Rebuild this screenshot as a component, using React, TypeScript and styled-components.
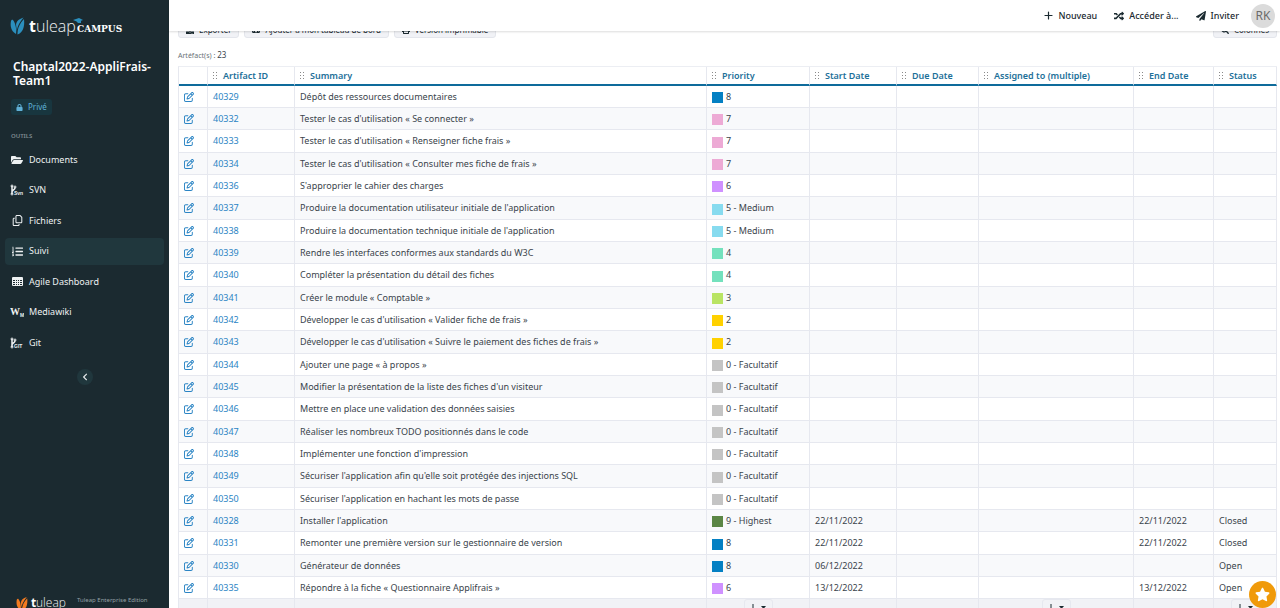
import React from "react";
import styled, { createGlobalStyle, css } from "styled-components";
import {
  FaFolderOpen,
  FaListOl,
  FaPaperPlane,
  FaRandom,
  FaStar,
  FaLock,
  FaChevronLeft,
  FaSearch,
  FaPrint,
  FaDownload,
  FaTachometerAlt,
} from "react-icons/fa";
import { FaRegCopy, FaRegPenToSquare } from "react-icons/fa6";

const GlobalStyle = createGlobalStyle`
  * { box-sizing: border-box; }
  body {
    margin: 0;
    background: #fff;
    color: #3a444c;
    font-family: "Noto Sans", "Open Sans", sans-serif;
    font-size: 9px;
    line-height: 14px;
  }
  button { font: inherit; color: inherit; border: 0; padding: 0; background: none; cursor: pointer; }
  a { text-decoration: none; }
`;

const Shell = styled.div`
  display: grid;
  grid-template-columns: 169px minmax(0, 1fr);
  height: 100vh;
  overflow: hidden;
`;

const Sidebar = styled.aside`
  display: flex;
  flex-direction: column;
  min-height: 0;
  overflow: hidden;
  background: #1b2a30;
  color: #e6eaec;
`;

const LogoLink = styled.a`
  display: block;
  padding: 15px 0 0 10px;
  height: 60px;
  svg { display: block; }
`;

const ProjectName = styled.h1`
  margin: 0;
  padding: 0 12px 0 13px;
  color: #fff;
  font-size: 12px;
  line-height: 14px;
  font-weight: 600;
`;

const Privacy = styled.span`
  display: flex;
  align-items: center;
  align-self: flex-start;
  gap: 5px;
  height: 16px;
  margin: 11px 0 0 11px;
  padding: 0 5px;
  border-radius: 3px;
  background: #18363f;
  color: #5fb0d6;
  font-size: 8px;
`;

const SectionTitle = styled.h2`
  margin: 15px 0 4px 11px;
  color: #7f8b90;
  font-size: 6px;
  line-height: 12px;
  font-weight: 600;
`;

const NavList = styled.ul`
  display: flex;
  flex-direction: column;
  justify-content: space-between;
  flex-shrink: 0;
  min-height: 210px;
  margin: 0;
  padding: 0 5px;
  list-style: none;
`;

const NavLink = styled.a<{ $active?: boolean }>`
  display: flex;
  align-items: center;
  gap: 5px;
  height: 27px;
  padding-left: 5px;
  border-radius: 4px;
  color: #eef1f2;
  background: ${(p) => (p.$active ? "#20373d" : "transparent")};
`;

const NavIcon = styled.span`
  display: flex;
  justify-content: center;
  width: 14px;
`;

const Collapse = styled.button`
  display: flex;
  align-items: center;
  justify-content: center;
  align-self: center;
  flex-shrink: 0;
  width: 16px;
  height: 16px;
  margin-top: 13px;
  border-radius: 50%;
  background: #20373d;
`;

const SidebarFooter = styled.footer`
  display: flex;
  align-items: flex-start;
  gap: 11px;
  height: 16px;
  margin-top: auto;
  padding-left: 16px;
  color: #94a0a5;
  font-size: 6px;
  line-height: 10px;
  svg { flex-shrink: 0; margin-top: 3px; }
  p { margin: 3px 0 0; }
`;

const Main = styled.main`
  display: flex;
  flex-direction: column;
  min-width: 0;
  min-height: 0;
`;

const TopBar = styled.header`
  position: relative;
  z-index: 1;
  display: flex;
  align-items: center;
  justify-content: flex-end;
  gap: 17px;
  flex-shrink: 0;
  height: 31px;
  padding-right: 5px;
  background: #fff;
  box-shadow: 0 1px 2px rgba(0, 0, 0, 0.14);
`;

const TopAction = styled.button`
  display: flex;
  align-items: center;
  gap: 5px;
  color: #1b2a30;
  font-weight: 500;
`;

const Avatar = styled.button`
  width: 24px;
  height: 24px;
  margin-left: -5px;
  border-radius: 50%;
  background: #dbdbdb;
  color: #6b6b6b;
  font-size: 12px;
`;

const Content = styled.div`
  flex: 1;
  min-height: 0;
  overflow: hidden;
  padding: 0 3px 0 9px;
`;

const ToolRow = styled.div`
  display: flex;
  gap: 5px;
  margin-top: -10px;
`;

const ToolButton = styled.button<{ $end?: boolean }>`
  display: flex;
  align-items: center;
  gap: 5px;
  height: 17px;
  padding: 0 7px;
  border: 1px solid #e4e6ec;
  border-radius: 3px;
  background: #f1f2f6;
  color: #1b2a30;
  font-size: 8px;
  ${(p) =>
    p.$end &&
    css`
      margin-left: auto;
    `}
`;

const Count = styled.p`
  margin: 10px 0 3px;
  color: #6a7278;
  font-size: 7px;
  strong { color: #3a444c; font-size: 8px; font-weight: 400; }
`;

const Table = styled.table`
  width: 100%;
  table-layout: fixed;
  border-collapse: separate;
  border-spacing: 0;
  border-left: 1px solid #e6e8ef;
  border-top: 1px solid #eceef3;
`;

const Head = styled.th<{ $width?: number }>`
  ${(p) =>
    p.$width &&
    css`
      width: ${p.$width}px;
    `}
  height: 19px;
  padding: 0 0 0 5px;
  border-right: 1px solid #e6e8ef;
  border-bottom: 2px solid #0e6b9b;
  color: #1d7099;
  font-weight: 600;
  text-align: left;
  white-space: nowrap;
`;

const HeadInner = styled.span`
  display: flex;
  align-items: center;
  gap: 5px;
`;

const Row = styled.tr`
  &:nth-child(even) { background: #f8f9fb; }
  &:nth-child(3n) > td { height: 23px; }
`;

const Cell = styled.td`
  height: 22px;
  padding: 0 5px;
  border-right: 1px solid #e6e8ef;
  border-bottom: 1px solid #e6e8ef;
  white-space: nowrap;
`;

const FootCell = styled(Cell)`
  background: #f1f2f6;
  text-align: center;
  vertical-align: top;
`;

const CellLink = styled.a`
  color: #2a84c4;
  svg { display: block; }
`;

const Priority = styled.span`
  display: flex;
  align-items: center;
  gap: 3px;
`;

const Swatch = styled.i<{ $color: string }>`
  width: 11px;
  height: 11px;
  margin-top: 2px;
  background: ${(p) => p.$color};
`;

const AggregateButton = styled.button`
  display: flex;
  align-items: center;
  justify-content: center;
  width: 29px;
  height: 17px;
  margin: 0 auto;
  border: 1px solid #e6e8ef;
  border-radius: 3px;
  color: #1b2a30;
`;

const StarButton = styled.button`
  position: fixed;
  right: 4px;
  bottom: 0;
  z-index: 2;
  display: flex;
  align-items: center;
  justify-content: center;
  width: 27px;
  height: 27px;
  border-radius: 50%;
  background: #f09a0a;
  color: #fff;
`;

const Leaf = ({ color }: { color: string }) => (
  <g fill={color}>
    <path d="M1 6 C0 11 1 16 6 19 C6.500 15 6 9 3 5 C2.500 4.500 1.300 4.800 1 6Z" />
    <path d="M13.500 2.500 C8.500 4 5.500 7 6.200 11 C6.600 13.500 6.800 15 6.800 17 C7 12 9 8 13.500 2.500Z" />
    <path d="M14 4 C9.500 9 7.500 13 7.500 19.500 C12.500 18 15 12 14 4Z" />
  </g>
);

const CampusLogo = () => (
  <svg width="120" height="26" viewBox="0 0 120 26" role="img" aria-label="Tuleap Campus">
    <Leaf color="#2b8fbe" />
    <text x="19" y="17" fill="#fff" fontFamily="Open Sans" fontSize="16" fontWeight="700">t</text>
    <text x="26" y="17" fill="#f0f3f4" fontFamily="Open Sans" fontSize="16" fontWeight="300">uleap</text>
    <path d="M63 5 L69 3 L73 5 L68 7Z M66 6 H71 V8 H68Z" fill="#2b8fbe" />
    <text x="67" y="17" fill="#fff" fontFamily="DejaVu Serif Condensed, DejaVu Serif" fontSize="10" fontWeight="700">CAMPUS</text>
  </svg>
);

const TuleapLogo = () => (
  <svg width="50" height="18" viewBox="0 0 50 18" role="img" aria-label="Tuleap">
    <g transform="scale(0.8)">
      <Leaf color="#f47b20" />
    </g>
    <text x="15" y="12" fill="#fff" fontFamily="Open Sans" fontSize="12" fontWeight="700">t</text>
    <text x="20" y="12" fill="#f0f3f4" fontFamily="Open Sans" fontSize="12" fontWeight="300">uleap</text>
  </svg>
);

const RepoIcon = ({ label }: { label: string }) => (
  <svg width="14" height="12" viewBox="0 0 14 12" fill="none" stroke="currentColor" aria-hidden="true">
    <path d="M2 2V10M2 8C2 5.500 5 6.500 5 3.500" strokeWidth="1.500" />
    <circle cx="2" cy="2" r="1" strokeWidth="1" />
    <circle cx="2" cy="10" r="1" strokeWidth="1" />
    <circle cx="5" cy="3" r="1" strokeWidth="1" />
    <text x="4" y="11" fill="currentColor" stroke="none" fontFamily="Liberation Sans" fontSize="5" fontWeight="700">
      {label}
    </text>
  </svg>
);

const WikiIcon = () => (
  <svg width="14" height="12" viewBox="0 0 14 12" aria-hidden="true">
    <text x="0" y="9" fill="currentColor" fontFamily="Liberation Serif" fontSize="10" fontWeight="700">W</text>
    <text x="10" y="11" fill="currentColor" fontFamily="Liberation Sans" fontSize="5" fontWeight="700">M</text>
  </svg>
);

const GridIcon = () => (
  <svg width="11" height="9" viewBox="0 0 11 9" aria-hidden="true">
    <rect width="11" height="9" rx="1" fill="currentColor" />
    <path
      d="M1 3h2v1H1z M4 3h1v1H4z M6 3h1v1H6z M8 3h2v1H8z M1 5h2v1H1z M4 5h1v1H4z M6 5h1v1H6z M8 5h2v1H8z M1 7h2v1H1z M4 7h1v1H4z M6 7h1v1H6z M8 7h2v1H8z"
      fill="#1b2a30"
    />
  </svg>
);

const PlusIcon = () => (
  <svg width="9" height="9" viewBox="0 0 9 9" aria-hidden="true">
    <path d="M4.500 1V8M1 4.500H8" stroke="currentColor" strokeWidth="1.200" strokeLinecap="round" />
  </svg>
);

const Grip = () => (
  <svg width="5" height="7" viewBox="0 0 5 7" fill="#8a8a8a" aria-hidden="true">
    <path d="M0 0h1v1H0z M3 0h1v1H3z M0 3h1v1H0z M3 3h1v1H3z M0 6h1v1H0z M3 6h1v1H3z" />
  </svg>
);

const AggregateIcon = () => (
  <svg width="16" height="8" viewBox="0 0 16 8" aria-hidden="true">
    <path d="M3 0V7M0 4L3 7L6 4" stroke="currentColor" fill="none" />
    <path d="M11 2h5l-2.500 3z" fill="currentColor" />
  </svg>
);

const navItems: { label: string; icon: React.ReactNode; active?: boolean }[] = [
  { label: "Documents", icon: <FaFolderOpen size={12} /> },
  { label: "SVN", icon: <RepoIcon label="Svn" /> },
  { label: "Fichiers", icon: <FaRegCopy size={11} /> },
  { label: "Suivi", icon: <FaListOl size={11} />, active: true },
  { label: "Agile Dashboard", icon: <GridIcon /> },
  { label: "Mediawiki", icon: <WikiIcon /> },
  { label: "Git", icon: <RepoIcon label="GIT" /> },
];

const columns: { label: string; width?: number; aggregate?: boolean }[] = [
  { label: "Artifact ID", width: 87 },
  { label: "Summary" },
  { label: "Priority", width: 103, aggregate: true },
  { label: "Start Date", width: 87 },
  { label: "Due Date", width: 82 },
  { label: "Assigned to (multiple)", width: 155, aggregate: true },
  { label: "End Date", width: 80 },
  { label: "Status", width: 63, aggregate: true },
];

const colors: Record<string, string> = {
  "9 - Highest": "#5b8645",
  "8": "#0480c3",
  "7": "#edaad5",
  "6": "#cf91ff",
  "5 - Medium": "#87dbef",
  "4": "#74e1bd",
  "3": "#b9e463",
  "2": "#ffd100",
  "0 - Facultatif": "#c4c4c4",
};

type Artifact = [id: number, summary: string, priority: string, start?: string, end?: string, status?: string];

const artifacts: Artifact[] = [
  [40329, "Dépôt des ressources documentaires", "8"],
  [40332, "Tester le cas d'utilisation « Se connecter »", "7"],
  [40333, "Tester le cas d'utilisation « Renseigner fiche frais »", "7"],
  [40334, "Tester le cas d'utilisation « Consulter mes fiche de frais »", "7"],
  [40336, "S'approprier le cahier des charges", "6"],
  [40337, "Produire la documentation utilisateur initiale de l'application", "5 - Medium"],
  [40338, "Produire la documentation technique initiale de l'application", "5 - Medium"],
  [40339, "Rendre les interfaces conformes aux standards du W3C", "4"],
  [40340, "Compléter la présentation du détail des fiches", "4"],
  [40341, "Créer le module « Comptable »", "3"],
  [40342, "Développer le cas d'utilisation « Valider fiche de frais »", "2"],
  [40343, "Développer le cas d'utilisation « Suivre le paiement des fiches de frais »", "2"],
  [40344, "Ajouter une page « à propos »", "0 - Facultatif"],
  [40345, "Modifier la présentation de la liste des fiches d'un visiteur", "0 - Facultatif"],
  [40346, "Mettre en place une validation des données saisies", "0 - Facultatif"],
  [40347, "Réaliser les nombreux TODO positionnés dans le code", "0 - Facultatif"],
  [40348, "Implémenter une fonction d'impression", "0 - Facultatif"],
  [40349, "Sécuriser l'application afin qu'elle soit protégée des injections SQL", "0 - Facultatif"],
  [40350, "Sécuriser l'application en hachant les mots de passe", "0 - Facultatif"],
  [40328, "Installer l'application", "9 - Highest", "22/11/2022", "22/11/2022", "Closed"],
  [40331, "Remonter une première version sur le gestionnaire de version", "8", "22/11/2022", "22/11/2022", "Closed"],
  [40330, "Générateur de données", "8", "06/12/2022", "", "Open"],
  [40335, "Répondre à la fiche « Questionnaire Applifrais »", "6", "13/12/2022", "13/12/2022", "Open"],
];

export default function App() {
  return (
    <>
      <GlobalStyle />
      <Shell>
        <Sidebar>
          <LogoLink href="#"><CampusLogo /></LogoLink>
          <ProjectName>Chaptal2022-AppliFrais-Team1</ProjectName>
          <Privacy><FaLock size={7} />Privé</Privacy>
          <SectionTitle>OUTILS</SectionTitle>
          <NavList>
            {navItems.map((item) => (
              <li key={item.label}>
                <NavLink href="#" $active={item.active}>
                  <NavIcon>{item.icon}</NavIcon>
                  {item.label}
                </NavLink>
              </li>
            ))}
          </NavList>
          <Collapse aria-label="Replier"><FaChevronLeft size={8} /></Collapse>
          <SidebarFooter>
            <TuleapLogo />
            <p>Tuleap Enterprise Edition<br />14.2-3</p>
          </SidebarFooter>
        </Sidebar>
        <Main>
          <TopBar>
            <TopAction><PlusIcon />Nouveau</TopAction>
            <TopAction><FaRandom size={10} />Accéder à...</TopAction>
            <TopAction><FaPaperPlane size={10} />Inviter</TopAction>
            <Avatar>RK</Avatar>
          </TopBar>
          <Content>
            <ToolRow>
              <ToolButton><FaDownload size={8} />Exporter</ToolButton>
              <ToolButton><FaTachometerAlt size={8} />Ajouter à mon tableau de bord</ToolButton>
              <ToolButton><FaPrint size={8} />Version imprimable</ToolButton>
              <ToolButton $end><FaSearch size={8} />Colonnes</ToolButton>
            </ToolRow>
            <Count>Artéfact(s) : <strong>23</strong></Count>
            <Table>
              <thead>
                <tr>
                  <Head $width={29} aria-label="Modifier" />
                  {columns.map((c) => (
                    <Head key={c.label} $width={c.width}>
                      <HeadInner><Grip />{c.label}</HeadInner>
                    </Head>
                  ))}
                </tr>
              </thead>
              <tbody>
                {artifacts.map(([id, summary, priority, start, end, status]) => (
                  <Row key={id}>
                    <Cell><CellLink href="#" aria-label={`Modifier ${id}`}><FaRegPenToSquare size={10} /></CellLink></Cell>
                    <Cell><CellLink href="#">{id}</CellLink></Cell>
                    <Cell>{summary}</Cell>
                    <Cell><Priority><Swatch $color={colors[priority]} />{priority}</Priority></Cell>
                    <Cell>{start}</Cell>
                    <Cell />
                    <Cell />
                    <Cell>{end}</Cell>
                    <Cell>{status}</Cell>
                  </Row>
                ))}
              </tbody>
              <tfoot>
                <tr>
                  <FootCell />
                  {columns.map((c) => (
                    <FootCell key={c.label}>
                      {c.aggregate && (
                        <AggregateButton aria-label={`Agréger ${c.label}`}><AggregateIcon /></AggregateButton>
                      )}
                    </FootCell>
                  ))}
                </tr>
              </tfoot>
            </Table>
          </Content>
        </Main>
      </Shell>
      <StarButton aria-label="Favoris"><FaStar size={15} /></StarButton>
    </>
  );
}
